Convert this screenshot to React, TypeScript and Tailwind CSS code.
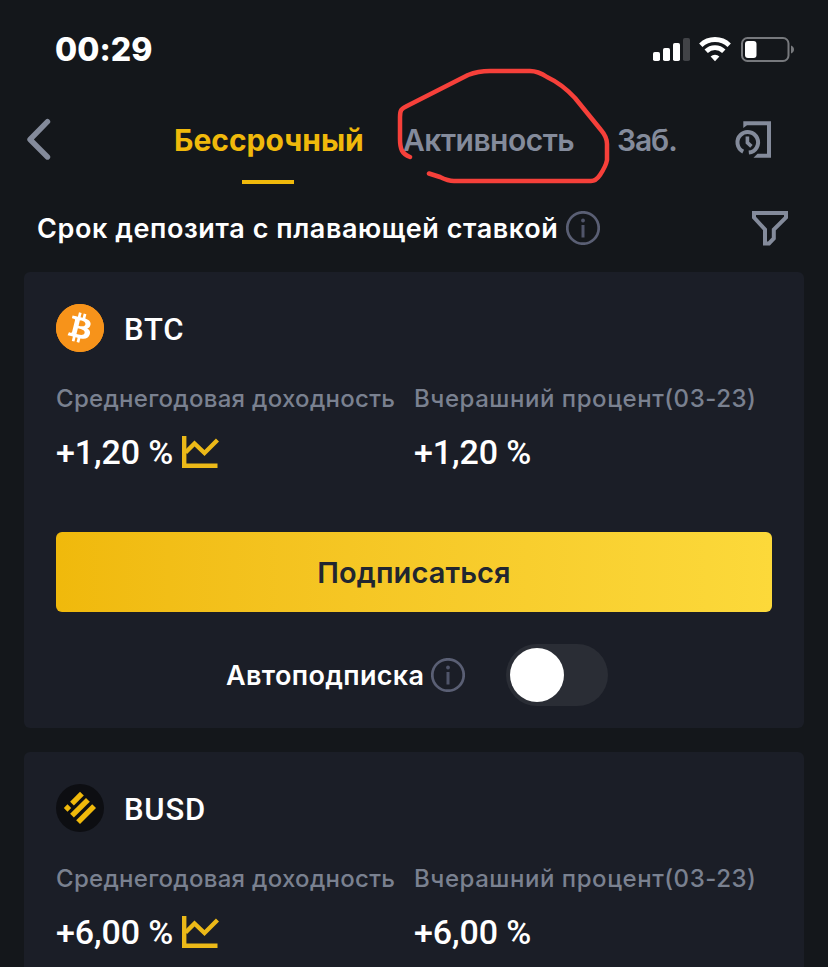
import React from 'react';
import { SiBitcoin } from 'react-icons/si';

interface Asset {
  symbol: string;
  rate: string;
  icon: React.ReactNode;
  expanded: boolean;
}

function BtcIcon() {
  return (
    <div className="w-12 h-12 rounded-full bg-white border border-[#f7931a]">
      <SiBitcoin className="w-12 h-12 -m-px text-[#f7931a]" />
    </div>
  );
}

function BusdIcon() {
  return (
    <svg className="w-12 h-12" viewBox="0 0 48 48" fill="#f0b90b">
      <circle cx="24" cy="24" r="24" fill="#0d0e12" />
      <path d="M24 7.8l3.8 3.8-9.9 9.9-3.8-3.8z" />
      <path d="M11.5 20.3l3.7 3.7-3.7 3.7-3.7-3.7z" />
      <path d="M30 13.9l3.8 3.8-15.9 15.9-3.8-3.8z" />
      <path d="M36.2 20.2l3.8 3.8L24 40l-3.8-3.8z" />
    </svg>
  );
}

function InfoIcon() {
  return (
    <svg className="w-[34px] h-[34px] shrink-0" viewBox="0 0 34 34" fill="none">
      <circle cx="17" cy="17" r="15.7" stroke="#5a5f74" strokeWidth="2.7" />
      <path d="M17 14v12.5" stroke="#50556a" strokeWidth="3" />
      <circle cx="17" cy="9.5" r="1.9" fill="#50556a" />
    </svg>
  );
}

function ChartIcon() {
  return (
    <svg className="w-[37px] h-8 shrink-0" viewBox="0 0 37 32" fill="none" stroke="#ecb918" strokeWidth="4.4">
      <path d="M2.2 0v29.7h33.3" />
      <path d="M3.5 16.5L12.5 7.5l10 9.500L35.500 4" />
    </svg>
  );
}

function StatusBar() {
  return (
    <div className="h-24 flex justify-between pl-[55px] pr-[33px]">
      <span className="mt-[30px] text-[32px] leading-10 font-extrabold tracking-[0.1px] text-white">00:29</span>
      <div className="mt-9 h-7 flex items-start">
        <svg className="w-[38px] h-7" viewBox="0 0 38 28" fill="#fff">
          <rect x="0" y="16" width="7" height="9" rx="1.8" />
          <rect x="10" y="12" width="7" height="13" rx="1.8" />
          <rect x="20" y="7" width="7" height="18" rx="1.8" />
          <rect x="30" y="2" width="7" height="23" rx="1.8" fill="#414347" />
        </svg>
        <svg className="ml-2 w-8 h-7" viewBox="0 0 32 28" fill="none" stroke="#fff" strokeWidth="4.8">
          <path d="M1.8 9.2a20.5 20.5 0 0 1 28.4 0" />
          <path d="M7.2 15.3a12.6 12.6 0 0 1 17.6 0" />
          <path d="M16 25.2l-4.4-4.6a6.4 6.4 0 0 1 8.8 0z" fill="#fff" stroke="none" />
        </svg>
        <svg className="ml-[10px] w-[54px] h-7" viewBox="0 0 54 28" fill="none">
          <rect x="1" y="2" width="46.5" height="23" rx="5.5" stroke="#77797d" strokeWidth="2" />
          <rect x="4" y="5" width="11.5" height="17" rx="3" fill="#fff" />
          <path d="M50 9.5c2.2.8 3 2.4 3 4s-.8 3.2-3 4z" fill="#77797d" />
        </svg>
      </div>
    </div>
  );
}

function NavBar() {
  return (
    <div className="relative h-[88px] flex items-start">
      <svg className="ml-[26px] mt-[22px] w-[26px] h-[43px]" viewBox="0 0 26 43" fill="none">
        <path d="M21.5 3.7L4 21.5l17.5 17.5" stroke="#848b9b" strokeWidth="5.4" strokeLinecap="round" strokeLinejoin="round" />
      </svg>
      <div className="ml-[120px] w-[506px] flex text-[30px] leading-[40px] font-semibold text-[#848b9b]">
        <div className="mt-6 ml-px w-[230px] shrink-0 flex flex-col">
          <span className="text-[#f0b90b] font-bold ml-px">Бессрочный</span>
          <span className="mt-5 ml-[69px] w-[52px] h-1 bg-[#f0b90b]" />
        </div>
        <span className="mt-6 w-[214px] shrink-0 tracking-[-0.5px]">Активность</span>
        <span className="mt-6 tracking-[-1.1px]">Заб.</span>
      </div>
      <svg className="ml-[56px] mt-6 w-[38px] h-10" viewBox="0 0 38 40" fill="none" stroke="#848b9b">
        <path d="M9.3 1.2H37v36.6H19.5l4-4H33V5.2H13L9.3 8z" fill="#848b9b" stroke="none" />
        <path d="M9.2 31.6a10.3 10.3 0 1 1 5.6 1" strokeWidth="4" />
        <path d="M13.4 16.5v6.2l4 3.6" strokeWidth="3.6" />
      </svg>
      {/* Hand-drawn marker stroke over the second tab */}
      <svg className="absolute left-[390px] top-[-36px] w-[230px] h-[130px]" viewBox="390 60 230 130" fill="none">
        <path
          d="M410 157C402 154 400 149 400 139V117C400 110 401 109 407 106L468 75Q478 71 490 71H530Q538 71 547 77Q562 84 575 98L601 130Q607 137 607 144V160Q606 166 600 175Q596 181 591 181H454Q448 181 440 177L429 173.5"
          stroke="#f6403a"
          strokeWidth="4.5"
          strokeLinecap="round"
          strokeLinejoin="round"
        />
      </svg>
    </div>
  );
}

function AssetCard({ asset }: { asset: Asset }) {
  return (
    <div className="h-[456px] rounded-md bg-[#1b1e27] px-8 pt-8">
      <div className="h-12 flex items-center gap-5">
        {asset.icon}
        <span className="mt-1 font-['Roboto',sans-serif] text-[31px] leading-10 font-medium tracking-[0.8px] text-white">
          {asset.symbol}
        </span>
      </div>

      <div className="mt-[29px] flex whitespace-nowrap">
        <div className="w-[358px] shrink-0">
          <div className="text-[24px] leading-9 font-medium tracking-[0.28px] text-[#7a8190]">Среднегодовая доходность</div>
          <div className="mt-[15px] h-10 flex items-center">
            <span className="w-[126px] font-['Roboto',sans-serif] text-[34px] leading-10 font-medium tracking-[-0.1px] text-white">
              {asset.rate}
            </span>
            <ChartIcon />
          </div>
        </div>
        <div>
          <div className="text-[24px] leading-9 font-medium tracking-[0.55px] text-[#7a8190]">Вчерашний процент(03-23)</div>
          <div className="mt-[15px] font-['Roboto',sans-serif] text-[34px] leading-10 font-medium tracking-[-0.1px] text-white">
            {asset.rate}
          </div>
        </div>
      </div>

      {asset.expanded && (
        <>
          <button className="mt-[60px] block w-full h-20 pt-0.5 rounded-md bg-gradient-to-r from-[#f0b90b] to-[#fcd93a] text-[29px] font-semibold tracking-[0.1px] text-[#212630]">
            Подписаться
          </button>

          <div className="mt-8 ml-[170px] flex items-center">
            <span className="mt-0.5 w-[198px] text-[27px] leading-9 font-semibold tracking-[0.35px] text-white">Автоподписка</span>
            <div className="ml-[7px]">
              <InfoIcon />
            </div>
            <div className="ml-[41px] w-[102px] h-[62px] rounded-full bg-[#2a2d35] p-1">
              <div className="w-[54px] h-[54px] rounded-full bg-white" />
            </div>
          </div>
        </>
      )}
    </div>
  );
}

export default function App() {
  const assets: Asset[] = [
    { symbol: 'BTC', rate: '+1,20 %', icon: <BtcIcon />, expanded: true },
    { symbol: 'BUSD', rate: '+6,00 %', icon: <BusdIcon />, expanded: false }
  ];

  return (
    <div className="w-[828px] h-[967px] overflow-hidden bg-[#14171b] font-['Inter',sans-serif]">
      <StatusBar />
      <NavBar />

      {/* Section title */}
      <div className="h-[88px] flex items-center pl-[37px] pr-10 whitespace-nowrap">
        <span className="mt-0.5 w-[522px] text-[27px] leading-9 font-semibold tracking-[0.58px] text-white">
          Срок депозита с плавающей ставкой
        </span>
        <div className="ml-[7px]">
          <InfoIcon />
        </div>
        <svg className="ml-auto w-9 h-[35px]" viewBox="0 0 36 35" fill="none">
          <path d="M2 2h32v4.5L21.8 18.5v9L17 32.5h-4v-14L2 6.5z" stroke="#848b9b" strokeWidth="4" />
        </svg>
      </div>

      <div className="px-6 flex flex-col gap-6">
        {assets.map((asset) => (
          <AssetCard key={asset.symbol} asset={asset} />
        ))}
      </div>
    </div>
  );
}
